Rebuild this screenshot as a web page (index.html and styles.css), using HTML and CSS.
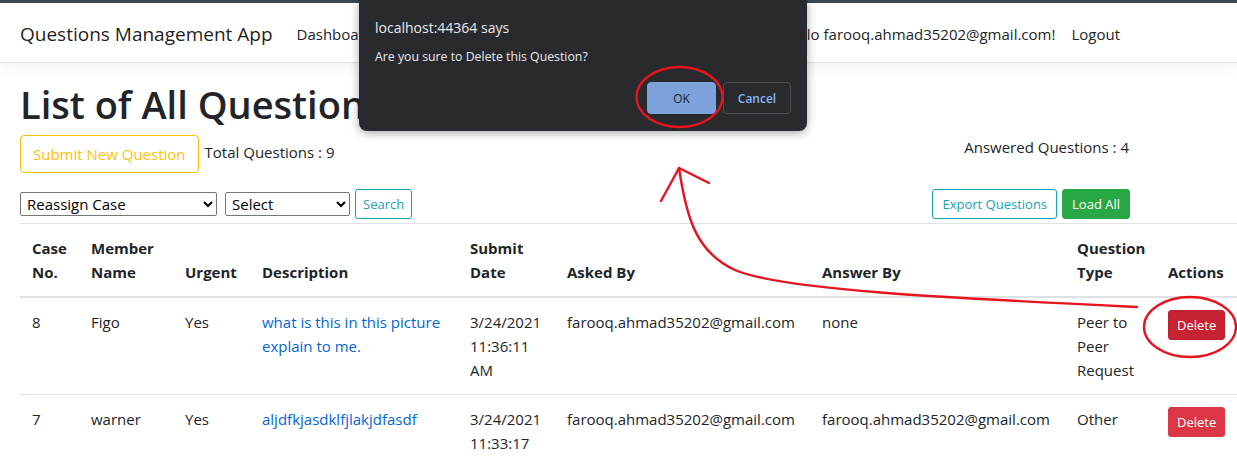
FILE: index.html
```html
<!DOCTYPE html>
<html lang="en">
<head>
<meta charset="utf-8">
<title>Questions Management App</title>
<link rel="stylesheet" href="styles.css">
</head>
<body>
<div class="chrome-strip"></div>
<header class="navbar">
  <div class="container nav-inner">
    <a class="brand" href="#">Questions Management App</a>
    <ul class="nav nav-main">
      <li><a class="nav-link" href="#">Dashboard</a></li>
    </ul>
    <ul class="nav nav-user">
      <li><a class="nav-link" href="#">Hello farooq.ahmad35202@gmail.com!</a></li>
      <li><a class="nav-link" href="#">Logout</a></li>
    </ul>
  </div>
</header>
<main class="container page">
  <h1 class="title">List of All Questions</h1>
  <div class="stats-row">
    <div class="stats-left">
      <button class="btn btn-outline-warning" type="button">Submit New Question</button>
      <span class="stat stat-total">Total Questions : 9</span>
    </div>
    <span class="stat stat-answered">Answered Questions : 4</span>
  </div>
  <div class="filter-row">
    <form class="filters">
      <select class="select select-wide"><option>Reassign Case</option></select>
      <select class="select select-narrow"><option>Select</option></select>
      <button class="btn btn-sm btn-outline-info" type="button">Search</button>
    </form>
    <div class="actions">
      <button class="btn btn-sm btn-outline-info btn-wide" type="button">Export Questions</button>
      <button class="btn btn-sm btn-success btn-wide" type="button">Load All</button>
    </div>
  </div>
  <table class="table">
    <colgroup>
      <col class="c-case"><col class="c-member"><col class="c-urgent"><col class="c-desc"><col class="c-date"><col class="c-asked"><col class="c-answer"><col class="c-type"><col class="c-actions">
    </colgroup>
    <thead>
      <tr>
        <th>Case No.</th>
        <th>Member Name</th>
        <th>Urgent</th>
        <th>Description</th>
        <th>Submit Date</th>
        <th>Asked By</th>
        <th>Answer By</th>
        <th>Question Type</th>
        <th>Actions</th>
      </tr>
    </thead>
    <tbody>
      <tr>
        <td>8</td>
        <td>Figo</td>
        <td>Yes</td>
        <td><a class="link" href="#">what is this in this picture explain to me.</a></td>
        <td>3/24/2021 11:36:11 AM</td>
        <td>farooq.ahmad35202@gmail.com</td>
        <td>none</td>
        <td>Peer to Peer Request</td>
        <td><button class="btn btn-sm btn-danger btn-active" type="button">Delete</button></td>
      </tr>
      <tr>
        <td>7</td>
        <td>warner</td>
        <td>Yes</td>
        <td><a class="link" href="#">aljdfkjasdklfjlakjdfasdf</a></td>
        <td>3/24/2021 11:33:17 AM</td>
        <td>farooq.ahmad35202@gmail.com</td>
        <td>farooq.ahmad35202@gmail.com</td>
        <td>Other</td>
        <td><button class="btn btn-sm btn-danger" type="button">Delete</button></td>
      </tr>
    </tbody>
  </table>
</main>

<div class="dialog">
  <div class="dialog-title">localhost:44364 says</div>
  <div class="dialog-msg">Are you sure to Delete this Question?</div>
  <div class="dialog-buttons">
    <button class="dlg-btn dlg-ok" type="button">OK</button>
    <button class="dlg-btn dlg-cancel" type="button">Cancel</button>
  </div>
</div>

<svg class="annotations" width="1237" height="462" viewBox="0 0 1237 462">
  <ellipse cx="679.5" cy="97" rx="43" ry="30" />
  <ellipse cx="1190" cy="327" rx="46" ry="30" />
  <path d="M1137 307 C950 298 780 290 735 270 C695 252 686 215 679 168" />
  <path d="M661 201 L679 168 L709 183" />
</svg>
</body>
</html>
```
FILE: styles.css
```css
* { box-sizing: border-box; }

html, body { margin: 0; padding: 0; }

body {
  font-family: "Open Sans", "Noto Sans", sans-serif;
  font-size: 15px;
  line-height: 24px;
  color: #212529;
  background: #fff;
  height: 462px;
  overflow: hidden;
  position: relative;
}

.chrome-strip { height: 3px; background: #3d4852; }

.container { width: 1110px; margin-left: 20px; }

/* Navbar */
.navbar {
  background: #fff;
  border-bottom: 1px solid #dee2e6;
  box-shadow: 0 4px 12px rgba(0, 0, 0, .05);
  height: 60px;
  padding-top: 2px;
  display: flex;
  align-items: center;
}
.nav-inner { display: flex; align-items: center; }
.brand {
  font-size: 19px;
  line-height: 30px;
  color: rgba(0, 0, 0, .9);
  text-decoration: none;
  margin-right: 16px;
}
.nav { list-style: none; margin: 0; padding: 0; display: flex; }
.nav-user { margin-left: auto; margin-right: 2px; }
.nav-link {
  display: block;
  padding: 8px;
  color: #212529;
  text-decoration: none;
}

/* Page */
.page { padding-top: 17px; }
.title {
  font-size: 38px;
  font-weight: 600;
  line-height: 48px;
  margin: 0 0 7px;
  color: #212529;
}

.btn {
  font-family: inherit;
  font-size: 15px;
  line-height: 24px;
  padding: 6px 12px;
  border: 1px solid transparent;
  border-radius: 4px;
  background: transparent;
  cursor: pointer;
}
.btn-sm { font-size: 13px; line-height: 20px; padding: 4px 8px; border-radius: 3px; }
.btn-wide { padding: 4px 9px; }
.btn-outline-warning { color: #ffc107; border-color: #ffc107; }
.btn-outline-info { color: #17a2b8; border-color: #17a2b8; }
.btn-success { color: #fff; background: #28a745; border-color: #28a745; }
.btn-danger { color: #fff; background: #dc3545; border-color: #dc3545; }
.btn-active { background: #c82333; border-color: #bd2130; }

.stats-row { display: flex; justify-content: space-between; align-items: flex-start; }
.stats-left { display: flex; align-items: flex-start; gap: 6px; }
.stat-total { margin-top: 5px; }
.stat-answered { margin-right: 1px; }

.filter-row {
  margin-top: 16px;
  display: flex;
  justify-content: space-between;
  align-items: center;
}
.filters { display: flex; align-items: center; margin: 0; }
.select {
  height: 24px;
  font-family: inherit;
  font-size: 15px;
  color: #000;
  background: #fff;
  border: 1px solid #767676;
  border-radius: 2px;
  padding: 0 2px;
}
.select-wide { width: 197px; }
.select-narrow { width: 125px; margin-left: 8px; }
.filters .btn { margin-left: 5px; padding: 4px 7px; }
.actions { display: flex; gap: 5px; }

/* Table */
.table {
  margin-top: 4px;
  width: 1217px;
  border-collapse: collapse;
  table-layout: fixed;
}
.c-case { width: 59px; }
.c-member { width: 94px; }
.c-urgent { width: 77px; }
.c-desc { width: 208px; }
.c-date { width: 97px; }
.c-asked { width: 255px; }
.c-answer { width: 255px; }
.c-type { width: 91px; }
.c-actions { width: 81px; }

.table th, .table td {
  padding: 12px;
  vertical-align: top;
  text-align: left;
  border-top: 1px solid #dee2e6;
}
.table thead th {
  vertical-align: bottom;
  border-bottom: 2px solid #dee2e6;
  font-weight: 700;
}
.link { color: #0366d6; text-decoration: none; }

/* Browser confirm dialog */
.dialog {
  position: absolute;
  left: 359px;
  top: 0;
  width: 448px;
  height: 131px;
  background: #292a2d;
  border-radius: 0 0 8px 8px;
  box-shadow: 0 2px 10px rgba(0, 0, 0, .35);
  padding: 16px 16px 0;
  color: #e8eaed;
  z-index: 10;
}
.dialog-title { font-size: 14px; line-height: 24px; }
.dialog-msg { font-size: 12.3px; line-height: 18px; margin-top: 8px; }
.dialog-buttons {
  display: flex;
  justify-content: flex-end;
  gap: 7px;
  margin-top: 16px;
}
.dlg-btn {
  height: 32px;
  font-family: inherit;
  font-size: 12px;
  border-radius: 4px;
  cursor: pointer;
}
.dlg-ok { width: 69px; background: #7ca1db; color: #202124; border: 1px solid #7ca1db; }
.dlg-cancel {
  width: 68px;
  background: transparent;
  color: #8ab4f8;
  border: 1px solid #4a4d51;
  font-weight: 600;
}

/* Hand-drawn red annotations */
.annotations {
  position: absolute;
  left: 0;
  top: 0;
  pointer-events: none;
  z-index: 20;
  fill: none;
  stroke: #e8131d;
  stroke-width: 2.4;
  stroke-linecap: round;
  stroke-linejoin: round;
}
```
